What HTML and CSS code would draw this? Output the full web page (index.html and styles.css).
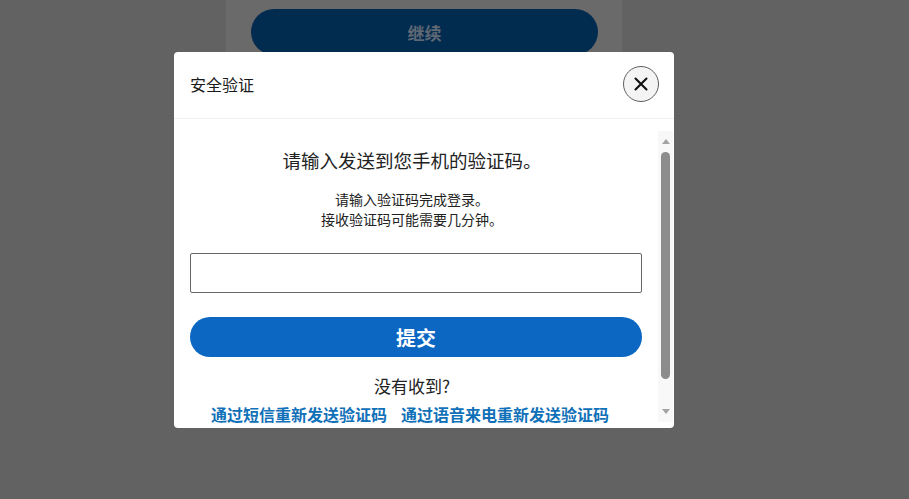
FILE: index.html
```html
<!DOCTYPE html>
<html lang="zh-CN">
<head>
<meta charset="utf-8">
<title>安全验证</title>
<link rel="stylesheet" href="styles.css">
</head>
<body>
<div class="page">
  <div class="card">
    <button class="continue" type="button">继续</button>
  </div>
</div>
<div class="modal" role="dialog" aria-label="安全验证">
  <div class="modal-header">
    <h2 class="modal-title">安全验证</h2>
    <button class="close" type="button" aria-label="关闭">
      <svg width="16" height="16" viewBox="0 0 16 16" aria-hidden="true"><path d="M2.5 2.5 L13.5 13.5 M13.5 2.5 L2.5 13.5" stroke="#111" stroke-width="2.1" stroke-linecap="round" fill="none"/></svg>
    </button>
  </div>
  <div class="modal-body">
    <div class="content">
      <h3 class="heading">请输入发送到您手机的验证码。</h3>
      <p class="sub">请输入验证码完成登录。<br>接收验证码可能需要几分钟。</p>
      <input class="code" type="text" aria-label="验证码">
      <button class="submit" type="button">提交</button>
      <p class="noreceive">没有收到?</p>
      <div class="links">
        <a href="#">通过短信重新发送验证码</a>
        <a href="#">通过语音来电重新发送验证码</a>
      </div>
    </div>
    <div class="scrollbar" aria-hidden="true">
      <span class="arrow up"></span>
      <span class="thumb"></span>
      <span class="arrow down"></span>
    </div>
  </div>
</div>
</body>
</html>
```
FILE: styles.css
```css
html, body {
  margin: 0;
  padding: 0;
}
body {
  width: 909px;
  height: 499px;
  overflow: hidden;
  background: #626262;
  font-family: "Noto Sans CJK SC", "Noto Sans", sans-serif;
  color: #222;
}
.page {
  display: flex;
  padding-left: 226px;
}
.card {
  width: 396px;
  height: 80px;
  background: #6a6a6a;
  padding: 9px 24px 0 25px;
  box-sizing: border-box;
}
.continue {
  display: block;
  width: 347px;
  height: 46px;
  border: none;
  border-radius: 23px;
  background: #022b50;
  color: #5f6873;
  font-family: inherit;
  font-size: 17px;
  font-weight: 700;
}
.modal {
  position: absolute;
  left: 174px;
  top: 52px;
  width: 500px;
  height: 376px;
  background: #fff;
  border-radius: 4px;
  display: flex;
  flex-direction: column;
  overflow: hidden;
}
.modal-header {
  height: 67px;
  flex: none;
  display: flex;
  align-items: center;
  justify-content: space-between;
  padding: 0 15px 3px 16px;
  box-sizing: border-box;
  border-bottom: 1px solid #f0f0f0;
}
.modal-title {
  margin: 0;
  font-size: 16px;
  font-weight: 400;
  color: #1a1a1a;
}
.close {
  width: 36px;
  height: 36px;
  border-radius: 50%;
  border: 1px solid #5e5e5e;
  background: #f4f4f4;
  display: flex;
  align-items: center;
  justify-content: center;
  padding: 0;
}
.modal-body {
  position: relative;
  flex: 1;
  overflow: hidden;
}
.content {
  display: flex;
  flex-direction: column;
  padding: 28px 32px 0 16px;
}
.heading {
  margin: 0;
  font-size: 18.5px;
  line-height: 26px;
  font-weight: 400;
  text-align: center;
  padding-right: 8px;
}
.sub {
  margin: 16px 0 0;
  font-size: 14px;
  line-height: 20px;
  text-align: center;
  padding-right: 8px;
}
.code {
  margin: 24px 0 0;
  height: 40px;
  box-sizing: border-box;
  border: 1px solid #666;
  border-radius: 2px;
  padding: 0 10px;
  font-family: inherit;
  font-size: 16px;
}
.submit {
  margin-top: 24px;
  height: 40px;
  border: none;
  border-radius: 20px;
  background: #0b67c2;
  color: #fff;
  font-family: inherit;
  font-size: 20px;
  font-weight: 700;
}
.noreceive {
  margin: 17px 0 0;
  font-size: 17px;
  line-height: 24px;
  text-align: center;
  padding-right: 8px;
}
.links {
  margin-top: 4px;
  display: flex;
  justify-content: center;
  gap: 14px;
  padding-right: 12px;
  line-height: 24px;
}
.links a {
  color: #1070b8;
  font-size: 16px;
  font-weight: 700;
  text-decoration: none;
}
.scrollbar {
  position: absolute;
  right: 1px;
  top: 12px;
  bottom: 6px;
  width: 15px;
  background: #f8f8f8;
  display: flex;
  flex-direction: column;
  align-items: center;
}
.arrow {
  width: 0;
  height: 0;
  border-left: 4px solid transparent;
  border-right: 4px solid transparent;
}
.arrow.up {
  margin-top: 8px;
  border-bottom: 5px solid #a3a3a3;
}
.arrow.down {
  margin-top: auto;
  margin-bottom: 8px;
  border-top: 5px solid #a3a3a3;
}
.thumb {
  margin-top: 8px;
  width: 9px;
  height: 227px;
  border-radius: 5px;
  background: #8c8c8c;
}
```
